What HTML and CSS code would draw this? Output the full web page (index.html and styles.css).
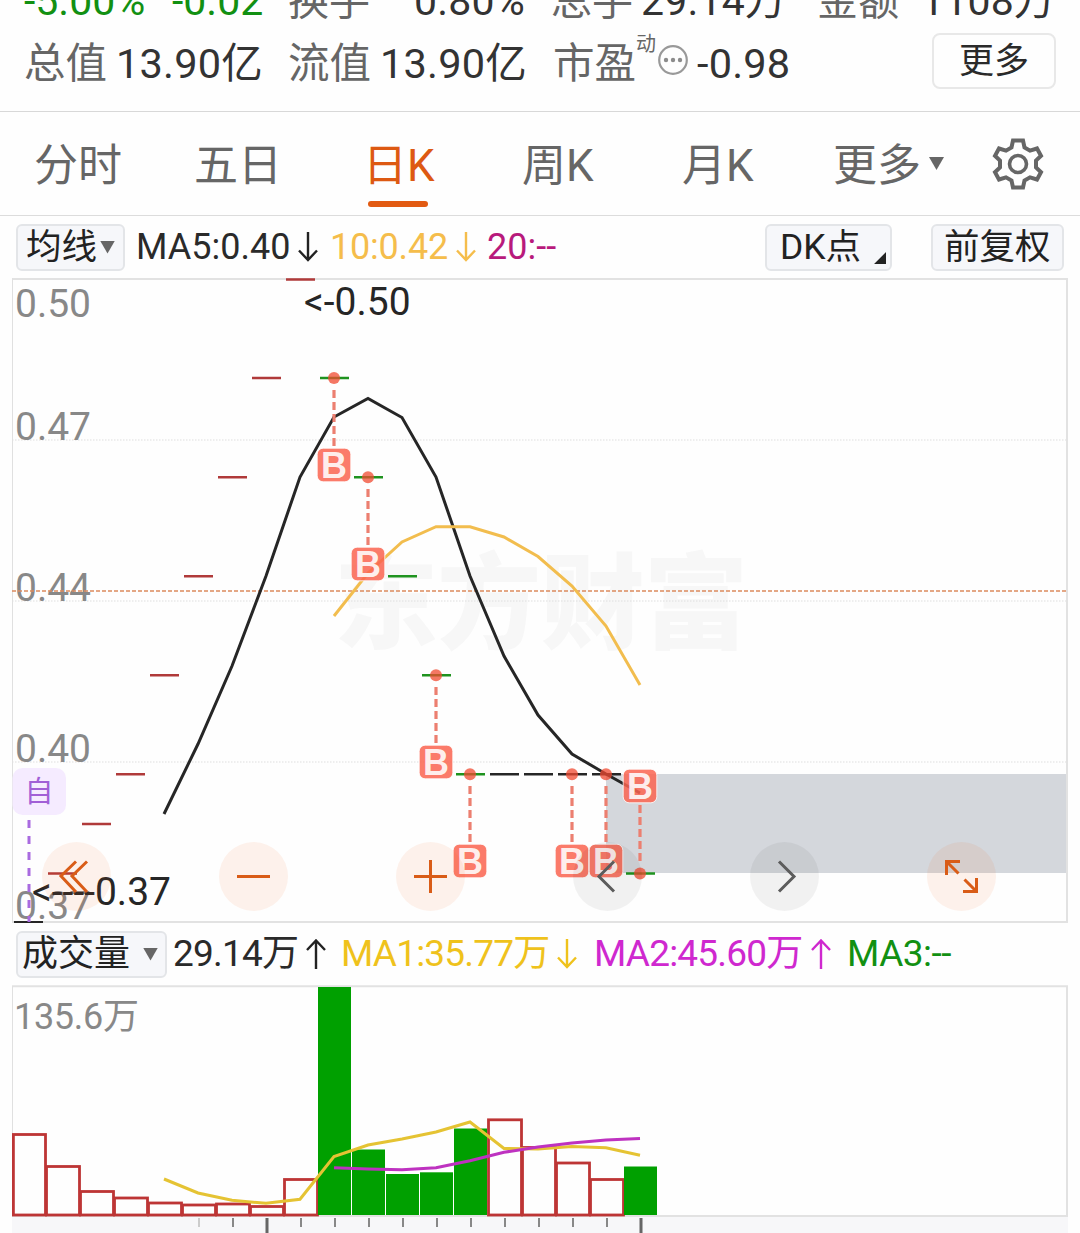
FILE: index.html
```html
<!DOCTYPE html>
<html lang="zh-CN">
<head>
    <meta charset="UTF-8">
    <meta name="viewport" content="width=device-width, initial-scale=1.0">
    <title>日K</title>
    <link rel="stylesheet" href="styles.css">
</head>
<body>

<!-- Quote summary -->
<header class="quote">
    <div class="quote-row quote-row-top">
        <span class="change">-5.00%</span>
        <span class="change-value">-0.02</span>
        <span class="label turnover-label">换手</span>
        <span class="value turnover">0.80%</span>
        <span class="label hands-label">总手</span>
        <span class="value hands">29.14万</span>
        <span class="label amount-label">金额</span>
        <span class="value">1108万</span>
    </div>
    <div class="quote-row">
        <span class="label cap-label">总值</span>
        <span class="value cap">13.90亿</span>
        <span class="label cap-label">流值</span>
        <span class="value cap cap-float">13.90亿</span>
        <span class="label pe-label">市盈</span>
        <span class="pe-type">动</span>
        <svg class="pe-info" width="32" height="32" viewBox="0 0 32 32">
            <circle cx="16" cy="16" r="13.8" fill="none" stroke="#999" stroke-width="2.2"/>
            <g fill="#8c8c8c"><circle cx="9" cy="16" r="2.2"/><circle cx="16" cy="16" r="2.2"/><circle cx="23" cy="16" r="2.2"/></g>
        </svg>
        <span class="value pe">-0.98</span>
        <button class="more-button">更多</button>
    </div>
</header>

<!-- Period tabs -->
<nav class="tabs">
    <a class="tab">分时</a>
    <a class="tab">五日</a>
    <a class="tab active">日K</a>
    <a class="tab">周K</a>
    <a class="tab tab-month">月K</a>
    <a class="tab tab-more">更多<i class="triangle"></i></a>
    <svg class="gear" width="52" height="54" viewBox="0 0 52 54">
        <path d="M21 3.500H31L32.500 10.500L38 13.700L45 11.500L49 18.800L44 23.500V30.500L49 35.200L45 42.500L38 40.300L32.500 43.500L31 50.500H21L19.500 43.500L14 40.300L7 42.500L3 35.200L8 30.500V23.500L3 18.800L7 11.500L14 13.700L19.500 10.500Z" fill="none" stroke="#666" stroke-width="4"/>
        <circle cx="26" cy="27" r="8.500" fill="none" stroke="#666" stroke-width="3.600"/>
    </svg>
</nav>

<!-- Moving average legend -->
<section class="legend">
    <button class="pill pill-ma">均线<i class="triangle"></i></button>
    <span class="ma5">MA5:0.40</span>
    <svg class="arrow arrow-ma5" width="20" height="30" viewBox="0 0 20 30"><path d="M10 0V28M1 18.500L10 28L19 18.500"/></svg>
    <span class="ma10">10:0.42</span>
    <svg class="arrow arrow-ma10" width="20" height="30" viewBox="0 0 20 30"><path d="M10 0V28M1 18.500L10 28L19 18.500"/></svg>
    <span class="ma20">20:--</span>
    <button class="pill pill-dk">DK点<i class="corner"></i></button>
    <button class="pill pill-adjust">前复权</button>
</section>

<!-- Price chart -->
<section class="price-chart">
    <svg width="1080" height="645" viewBox="0 278 1080 645">
        <text class="watermark" x="334" y="641" textLength="414">东方财富</text>
        <rect x="606" y="774" width="461" height="99" fill="#d4d7dc"/>

        <g class="grid">
            <path d="M12 440H1067M12 601H1067M12 762H1067"/>
        </g>
        <path class="frame" d="M12 279H1067V922H12"/>
        <path class="frame-left" d="M12.500 278V923"/>

        <g class="axis-text">
            <text x="15" y="317">0.50</text>
            <text x="15" y="440">0.47</text>
            <text x="15" y="601">0.44</text>
            <text x="15" y="762">0.40</text>
            <text x="15" y="919">0.37</text>
        </g>
        <path class="cost-line" d="M12 591H1067"/>

        <!-- Limit-up / limit-down days -->
        <path class="day up" d="M48 873.500h29M82 824h29M116 774.300h29M150 675.300h29M184 576.200h29M218 477.200h29M252 378h29M286 279.500h29"/>
        <path class="day down" d="M320 378h29M354 477.200h29M388 576.200h29M422 675.300h29M456 774.300h29M626 873.500h29"/>
        <path class="day flat" d="M14 922.300h29M490 774.300h29M524 774.300h29M558 774.300h29M592 774.300h29"/>

        <polyline class="line-ma5" points="164,814 198,744 232,666 266,576 300,477 334,417 368,398.500 402,417.500 436,477 470,576 504,656 538,715 572,754 606,774 640,793"/>
        <polyline class="line-ma10" points="334,616 368,573 402,542 436,526.700 470,526.700 504,537 538,556.500 572,586 606,626 640,685"/>

        <!-- Self-selected mark -->
        <path class="self-line" d="M29 820V922"/>
        <rect x="12.500" y="768" width="53.500" height="47" rx="10" fill="#f5ebff"/>
        <text class="self-text" x="39" y="802">自</text>

        <!-- Buy points -->
        <g class="buy-line">
            <path d="M334 390V446M368 489V545M436 687V743M470 786V842M572 786V842M606 786V842M640 805V861"/>
        </g>
        <g class="buy-dot">
            <circle cx="334" cy="378" r="6"/>
            <circle cx="368" cy="477.200" r="6"/>
            <circle cx="436" cy="675.300" r="6"/>
            <circle cx="470" cy="774.300" r="6"/>
            <circle cx="572" cy="774.300" r="6"/>
            <circle cx="606" cy="774.300" r="6"/>
            <circle cx="640" cy="873.500" r="6"/>
        </g>
        <g class="buy-box">
            <rect x="317.200" y="448.200" width="33.600" height="33.600" rx="6"/>
            <rect x="351.200" y="547.200" width="33.600" height="33.600" rx="6"/>
            <rect x="419.200" y="745.200" width="33.600" height="33.600" rx="6"/>
            <rect x="453.200" y="844.200" width="33.600" height="33.600" rx="6"/>
            <rect x="555.200" y="844.200" width="33.600" height="33.600" rx="6"/>
            <rect x="589.200" y="844.200" width="33.600" height="33.600" rx="6"/>
            <rect x="623.200" y="769.200" width="33.600" height="33.600" rx="6"/>
        </g>
        <g class="buy-text">
            <text x="334" y="478">B</text>
            <text x="368" y="577">B</text>
            <text x="436" y="775">B</text>
            <text x="470" y="874">B</text>
            <text x="572" y="874">B</text>
            <text x="606" y="874">B</text>
            <text x="640" y="799">B</text>
        </g>

        <text class="extreme" x="304" y="315">&lt;-0.50</text>
        <text class="extreme" x="32" y="905">&lt;----0.37</text>
    </svg>

    <div class="controls">
        <button class="round"><svg width="69" height="69" viewBox="0 0 69 69"><path d="M34 19.500L19 34L34 50M45 19.500L30 34L45 50"/></svg></button>
        <button class="round"><svg width="69" height="69" viewBox="0 0 69 69"><path d="M18 34.500H51"/></svg></button>
        <button class="round"><svg width="69" height="69" viewBox="0 0 69 69"><path d="M18 34.500H51M34.500 18V51"/></svg></button>
        <button class="round gray"><svg width="69" height="69" viewBox="0 0 69 69"><path d="M41 19.500L26 34.500L41 49.500"/></svg></button>
        <button class="round gray"><svg width="69" height="69" viewBox="0 0 69 69"><path d="M29 19.500L44 34.500L29 49.500"/></svg></button>
        <button class="round"><svg width="69" height="69" viewBox="0 0 69 69"><path d="M19.500 33V19.500H33M20 20L31.500 31.500M49.500 36V49.500H36M49 49L37.500 37.500"/></svg></button>
    </div>
</section>

<!-- Volume legend -->
<section class="legend legend-volume">
    <button class="pill pill-volume">成交量<i class="triangle"></i></button>
    <span class="vol">29.14万</span>
    <svg class="arrow arrow-vol" width="20" height="30" viewBox="0 0 20 30"><path d="M10 30V1.500M1 11L10 1.500L19 11"/></svg>
    <span class="vol-ma1">MA1:35.77万</span>
    <svg class="arrow arrow-ma1" width="20" height="30" viewBox="0 0 20 30"><path d="M10 0V28M1 18.500L10 28L19 18.500"/></svg>
    <span class="vol-ma2">MA2:45.60万</span>
    <svg class="arrow arrow-ma2" width="20" height="30" viewBox="0 0 20 30"><path d="M10 30V1.500M1 11L10 1.500L19 11"/></svg>
    <span class="vol-ma3">MA3:--</span>
</section>

<!-- Volume chart -->
<section class="volume-chart">
    <svg width="1080" height="248" viewBox="0 985 1080 248">
        <rect x="12" y="1217" width="1056" height="16" fill="#f7f7f9"/>
        <path class="frame" d="M12 986.300H1067V1216H12"/>
        <path class="frame-left" d="M12.500 986V1216"/>
        <text class="volume-text" x="14" y="1029">135.6万</text>

        <g class="volume-up">
            <rect x="13.400" y="1134.500" width="32.100" height="80.500"/>
            <rect x="46.500" y="1166.500" width="33" height="48.500"/>
            <rect x="80.500" y="1191.500" width="33" height="23.500"/>
            <rect x="114.500" y="1198" width="33" height="17"/>
            <rect x="148.500" y="1203" width="33" height="12"/>
            <rect x="182.500" y="1205" width="33" height="10"/>
            <rect x="216.500" y="1204" width="33" height="11"/>
            <rect x="250.500" y="1206.500" width="33" height="8.500"/>
            <rect x="284.500" y="1179.500" width="33" height="35.500"/>
            <rect x="488.500" y="1119.800" width="33" height="95.200"/>
            <rect x="522.500" y="1147.500" width="33" height="67.500"/>
            <rect x="556.500" y="1163" width="33" height="52"/>
            <rect x="590.500" y="1179.500" width="33" height="35.500"/>
        </g>
        <g class="volume-down">
            <rect x="318" y="987" width="33" height="228"/>
            <rect x="352" y="1149.500" width="33" height="65.500"/>
            <rect x="386" y="1174" width="33" height="41"/>
            <rect x="420" y="1172.300" width="33" height="42.700"/>
            <rect x="454" y="1128.500" width="33" height="86.500"/>
            <rect x="624" y="1166.500" width="33" height="48.500"/>
        </g>

        <polyline class="line-vol1" points="164,1179 198,1193 232,1200.300 266,1203.300 300,1199.300 334,1156.500 368,1145 402,1139 436,1132 470,1122 504,1148.500 538,1149 572,1146.500 606,1147.700 640,1155.300"/>
        <polyline class="line-vol2" points="334,1167.700 368,1169 402,1169.700 436,1167.700 470,1160.700 504,1152.300 538,1147 572,1143 606,1140 640,1138.500"/>

        <path class="tick-light" d="M199 1218v9"/>
        <path class="tick" d="M233 1218v9M301 1218v9M335 1218v9M369 1218v9M403 1218v9M437 1218v9M471 1218v9M505 1218v9M539 1218v9M573 1218v9M607 1218v9"/>
        <path class="tick-big" d="M267 1218v15M641 1218v15"/>
    </svg>
</section>

</body>
</html>
```
FILE: styles.css
```css
/* General styles */
body {
    width: 1080px;
    height: 1233px;
    margin: 0;
    overflow: hidden;
    background-color: #fefefe;
    color: #2a2a2a;
    font-family: Roboto, "Noto Sans CJK SC", sans-serif;
}

svg {
    display: block;
    flex-shrink: 0;
}

button {
    box-sizing: border-box;
    margin: 0;
    padding: 0;
    border: none;
    background: none;
    color: inherit;
    font-family: inherit;
}

/* Quote summary */
.quote {
    height: 111px;
    overflow: hidden;
    border-bottom: 1px solid #d8d8d8;
}

.quote-row {
    display: flex;
    height: 63px;
    padding-left: 24px;
    font-size: 41.5px;
    line-height: 64px;
    white-space: nowrap;
}

.quote-row-top {
    margin-top: -31px;
    font-size: 41px;
}

.quote-row span {
    flex-shrink: 0;
}

.label {
    color: #666;
}

.value {
    color: #333;
    letter-spacing: 0.2px;
}

.change,
.change-value {
    color: #129012;
}

.change {
    width: 148px;
}

.change-value {
    width: 116px;
}

.turnover-label {
    width: 126px;
}

.turnover {
    width: 137px;
}

.hands-label {
    width: 90px;
}

.hands {
    width: 176px;
}

.amount-label {
    width: 104px;
}

.cap-label {
    width: 92px;
}

.cap {
    width: 172px;
}

.cap-float {
    width: 173px;
}

.pe-label {
    width: 83px;
}

.pe-type {
    width: 20px;
    color: #666;
    font-size: 20px;
    line-height: 25px;
}

.pe-info {
    margin-top: 12px;
    margin-left: 1px;
}

.pe {
    width: 235px;
    margin-left: 8px;
}

.more-button {
    width: 124px;
    height: 56px;
    margin-top: 1px;
    border: 2px solid #e8e8e8;
    border-radius: 8px;
    color: #2a2a2a;
    font-size: 35px;
    line-height: 53px;
}

/* Period tabs */
.tabs {
    display: flex;
    height: 103px;
    padding-left: 34px;
    border-bottom: 1px solid #dcdcdc;
    color: #666;
    font-size: 44px;
    line-height: 109px;
    white-space: nowrap;
}

.tab {
    width: 160px;
}

.tab.active {
    display: flex;
    flex-direction: column;
    width: 159px;
    padding-left: 9px;
    color: #dd5912;
}

.tab.active::after {
    content: "";
    width: 60px;
    height: 6px;
    margin-top: -20px;
    margin-left: 5px;
    border-radius: 3px;
    background-color: #e25a12;
}

.tab-month {
    width: 151px;
}

.tab-more {
    display: flex;
    width: 159px;
}

.triangle {
    width: 15px;
    height: 13px;
    background-color: #666;
    clip-path: polygon(0 0, 100% 0, 50% 100%);
}

.tab-more .triangle {
    margin-top: 45px;
    margin-left: 8px;
}

.gear {
    margin-top: 25px;
}

/* Indicator legends */
.legend {
    display: flex;
    align-items: center;
    height: 62px;
    padding-left: 16px;
    font-size: 36px;
    line-height: 64px;
    white-space: nowrap;
}

.pill {
    display: flex;
    align-items: center;
    height: 47px;
    border: 2px solid #e3e5e8;
    border-radius: 6px;
    background-color: #f6f7fa;
    color: #222;
    font-size: 35.5px;
    line-height: 46px;
}

.pill-ma {
    width: 109px;
    padding-left: 8px;
}

.pill-ma .triangle {
    margin-left: 3px;
}

.ma5 {
    width: 161px;
    margin-left: 11px;
}

.arrow {
    fill: none;
    stroke: #222;
    stroke-width: 2.4;
}

.arrow-ma5 {
    margin-left: 1px;
}

.ma10 {
    width: 125px;
    margin-left: 12px;
    color: #f5bd4b;
    letter-spacing: -0.2px;
}

.arrow-ma10 {
    margin-left: 1px;
    stroke: #f5bd4b;
}

.ma20 {
    width: 278px;
    margin-left: 11px;
    color: #b81a7c;
}

.pill-dk {
    width: 127px;
    padding-left: 13px;
}

.corner {
    width: 12px;
    height: 12px;
    margin-top: 22px;
    margin-left: 13px;
    background-color: #222;
    clip-path: polygon(100% 0, 100% 100%, 0 100%);
}

.pill-adjust {
    width: 133px;
    margin-left: 39px;
    padding-left: 11px;
}

.legend-volume {
    font-size: 37px;
    letter-spacing: -0.8px;
}

.pill-volume {
    width: 151px;
    padding-left: 4px;
    font-size: 36px;
    letter-spacing: 0;
}

.pill-volume .triangle {
    margin-left: 13px;
}

.vol {
    width: 133px;
    margin-left: 6px;
}

.vol-ma1 {
    width: 216px;
    margin-left: 15px;
    color: #efc21c;
}

.arrow-ma1 {
    stroke: #efc21c;
}

.vol-ma2 {
    width: 217px;
    margin-left: 17px;
    color: #cf28cf;
}

.arrow-ma2 {
    stroke: #cf28cf;
}

.vol-ma3 {
    margin-left: 16px;
    color: #129012;
    letter-spacing: -0.5px;
}

/* Charts */
.price-chart {
    position: relative;
    height: 645px;
}

.frame {
    fill: none;
    stroke: #e2e2e2;
    stroke-width: 2;
}

.frame-left {
    stroke: #e0e0e0;
}

.grid {
    fill: none;
    stroke: #dedede;
    stroke-dasharray: 1.5 1.5;
}

.axis-text {
    fill: #888;
    font-size: 39px;
}

.watermark {
    fill: #f7f7f7;
    font-size: 104px;
    font-weight: 900;
}

.cost-line {
    stroke: #dc8a5e;
    stroke-width: 1.6;
    stroke-dasharray: 4 2;
}

.day {
    fill: none;
    stroke-width: 2.6;
}

.up {
    stroke: #b03a3a;
}

.down {
    stroke: #1f931f;
}

.flat {
    stroke: #262626;
}

polyline {
    fill: none;
    stroke-width: 3;
}

.line-ma5 {
    stroke: #262626;
}

.line-ma10 {
    stroke: #f2bd4e;
}

.self-line {
    stroke: #a96be0;
    stroke-width: 3;
    stroke-dasharray: 8 8;
}

.self-text {
    fill: #a15fd6;
    font-size: 29px;
    text-anchor: middle;
}

.buy-line {
    fill: none;
    stroke: #ec7f70;
    stroke-width: 3.2;
    stroke-dasharray: 8 4;
}

.buy-dot {
    fill: #f04a30;
    fill-opacity: 0.75;
}

.buy-box {
    fill: #fa6450;
    fill-opacity: 0.85;
    stroke: #fff;
    stroke-opacity: 0.8;
}

.buy-text {
    fill: #fff;
    fill-opacity: 0.9;
    font-family: "Liberation Sans", sans-serif;
    font-size: 36px;
    font-weight: bold;
    text-anchor: middle;
}

.extreme {
    fill: #262626;
    font-size: 39px;
}

/* Buttons that float over the price chart */
.controls {
    position: absolute;
    left: 42px;
    bottom: 12px;
    display: flex;
    gap: 108px;
}

.round {
    width: 69px;
    height: 69px;
    border-radius: 50%;
    background-color: rgba(240, 90, 10, 0.08);
}

.round path {
    fill: none;
    stroke: #d95c17;
    stroke-width: 3;
}

.round.gray {
    background-color: rgba(0, 0, 0, 0.05);
}

.round.gray path {
    stroke: #5c5c5c;
}

/* Volume chart */
.volume-text {
    fill: #888;
    font-size: 36px;
    letter-spacing: -0.3px;
}

.volume-up {
    fill: #fefefe;
    stroke: #bd3535;
    stroke-width: 2.8;
}

.volume-down {
    fill: #00a000;
}

.line-vol1 {
    stroke: #e5c333;
}

.line-vol2 {
    stroke: #be32c0;
}

.tick,
.tick-light {
    fill: none;
    stroke: #888;
    stroke-width: 2;
}

.tick-light {
    stroke: #ccc;
}

.tick-big {
    stroke: #666;
    stroke-width: 3;
}
```
